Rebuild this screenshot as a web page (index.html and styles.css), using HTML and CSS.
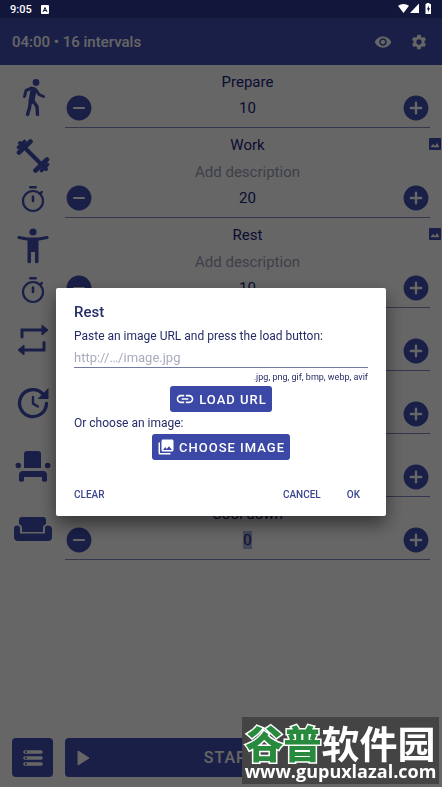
FILE: index.html
```html
<!DOCTYPE html>
<html lang="en">
<head>
	<meta charset="utf-8">
	<meta name="viewport" content="width=device-width, initial-scale=1">
	<title>Interval timer</title>
	<link rel="stylesheet" href="styles.css">
</head>
<body>
<!-- shared icons -->
<svg class="sprite" aria-hidden="true">
	<symbol id="minus" viewBox="0 0 26 26"><circle cx="13" cy="13" r="12.4" fill="currentColor"/><path d="M8 13h10" stroke="#fff" stroke-width="2.2" stroke-linecap="round"/></symbol>
	<symbol id="plus" viewBox="0 0 26 26"><circle cx="13" cy="13" r="12.4" fill="currentColor"/><path d="M7.8 13h10.4M13 7.8v10.4" stroke="#fff" stroke-width="2.4" stroke-linecap="round"/></symbol>
	<symbol id="timer" viewBox="0 0 24 28"><g fill="none" stroke="currentColor" stroke-linecap="round"><circle cx="12" cy="16" r="10" stroke-width="2.2"/><path d="M9.3 2.2h5.4M12 11.5v4.5" stroke-width="2.6"/><path d="M19.5 8.5l1.3-1.5" stroke-width="2.4"/></g></symbol>
	<symbol id="picture" viewBox="0 0 12 12"><rect width="12" height="12" rx="1" fill="currentColor"/><path d="M2 9.3V8.2l2-2.2 2 2.1 2.1-3L10 8.2v1.1z" fill="#fff"/></symbol>
</svg>

<div class="status">
	<span>9:05</span>
	<svg width="8" height="9" viewBox="0 0 8 9"><rect width="8" height="9" rx="1" fill="#fff"/><path d="M2 7l2-4.5L6 7M2.7 5.5h2.6" fill="none" stroke="#11163a"/></svg>
	<svg class="signal" width="34" height="12" viewBox="0 0 34 12" fill="#fff"><path d="M0 2.8Q5.500-.8 11 2.800L5.500 10zM21 .5V10h-9z"/><path d="M28.500 1V0h3v1h1.500v10h-5.500V1z"/><path d="M30.800 2.500l-2 4h1.200v2.700l2-4h-1.200z" fill="#11163a"/></svg>
</div>

<header class="bar">
	<h1>04:00 • 16 intervals</h1>
	<button aria-label="Preview"><svg width="18" height="18" viewBox="0 0 24 24"><path fill="currentColor" d="M12 4.500C7 4.500 2.730 7.610 1 12c1.730 4.390 6 7.500 11 7.500s9.270-3.110 11-7.500c-1.730-4.390-6-7.500-11-7.500zM12 17c-2.760 0-5-2.240-5-5s2.240-5 5-5 5 2.240 5 5-2.240 5-5 5zm0-8c-1.660 0-3 1.340-3 3s1.340 3 3 3 3-1.340 3-3-1.340-3-3-3z"/></svg></button>
	<button aria-label="Settings"><svg width="18" height="18" viewBox="0 0 24 24"><path fill="currentColor" d="M19.140 12.940c.04-.3.06-.61.06-.94 0-.32-.02-.64-.07-.94l2.030-1.580c.18-.14.23-.41.12-.61l-1.920-3.320c-.12-.22-.37-.29-.59-.22l-2.390.96c-.5-.38-1.030-.7-1.620-.94l-.36-2.540c-.04-.24-.24-.41-.48-.41h-3.840c-.24 0-.43.17-.47.41l-.36 2.540c-.59.24-1.130.57-1.620.94l-2.390-.96c-.22-.08-.47 0-.59.22L2.740 8.870c-.12.21-.08.47.12.61l2.030 1.580c-.05.3-.09.63-.09.94s.02.64.07.94l-2.030 1.580c-.18.14-.23.41-.12.61l1.920 3.320c.12.22.37.29.59.22l2.390-.96c.5.38 1.030.7 1.620.94l.36 2.540c.05.24.24.41.48.41h3.840c.24 0 .44-.17.47-.41l.36-2.540c.59-.24 1.130-.56 1.620-.94l2.390.96c.22.08.47 0 .59-.22l1.920-3.320c.12-.22.07-.47-.12-.61l-2.010-1.580zM12 15.600c-1.980 0-3.600-1.620-3.600-3.600s1.620-3.600 3.600-3.600 3.600 1.620 3.600 3.600-1.620 3.600-3.600 3.600z"/></svg></button>
</header>

<main class="list">
	<section class="item">
		<div class="icons">
			<svg width="24" height="40" viewBox="0 0 24 40"><circle cx="15" cy="5.500" r="3.400" fill="currentColor"/><g fill="none" stroke="currentColor" stroke-linecap="round" stroke-linejoin="round"><path d="M3.500 19.500L5 13.500l6-2.500 4 2 3 4.500 4.500 2" stroke-width="3"/><path d="M12.500 13l-2 11" stroke-width="6"/><path d="M9.500 24L8.500 31l-2 6.500M12 24l4 5.500.5 8" stroke-width="3.400"/></g></svg>
		</div>
		<div class="body">
			<label for="prepare">Prepare</label>
			<div class="stepper">
				<button aria-label="Less"><svg><use href="#minus"/></svg></button>
				<input id="prepare" value="10">
				<button aria-label="More"><svg><use href="#plus"/></svg></button>
			</div>
		</div>
	</section>
	<section class="item">
		<div class="icons pair">
			<svg width="34" height="34" viewBox="0 0 34 34" fill="none" stroke="currentColor" stroke-linecap="round"><path d="M8 8l18 18" stroke-width="4"/><path d="M3 13.500L14.500 2.500" stroke-width="4.600"/><path d="M2.500 8.500L8.500 2.500" stroke-width="3.600"/><path d="M4 4l5 5" stroke-width="4"/><path d="M19.500 31.500L31 20.500" stroke-width="4.600"/><path d="M25.500 31.500l6-6" stroke-width="3.600"/><path d="M25 25l5 5" stroke-width="4"/></svg>
			<svg width="24" height="28"><use href="#timer"/></svg>
		</div>
		<div class="body">
			<label for="work">Work</label>
			<input class="desc" placeholder="Add description" aria-label="Work description">
			<div class="stepper">
				<button aria-label="Less"><svg><use href="#minus"/></svg></button>
				<input id="work" value="20">
				<button aria-label="More"><svg><use href="#plus"/></svg></button>
			</div>
		</div>
		<button class="badge" aria-label="Work image"><svg><use href="#picture"/></svg></button>
	</section>
	<section class="item">
		<div class="icons pair">
			<svg width="32" height="36" viewBox="0 0 32 36"><circle cx="16" cy="4" r="3.600" fill="currentColor"/><path d="M2 9.500l8 1.500h12l8-1.500" fill="none" stroke="currentColor" stroke-width="3.200" stroke-linecap="round" stroke-linejoin="round"/><path d="M10.500 10h11v24.500q-2 1.500-3.500 0V24h-4v10.500q-1.500 1.500-3.500 0z" fill="currentColor"/></svg>
			<svg width="24" height="28"><use href="#timer"/></svg>
		</div>
		<div class="body">
			<label for="rest">Rest</label>
			<input class="desc" placeholder="Add description" aria-label="Rest description">
			<div class="stepper">
				<button aria-label="Less"><svg><use href="#minus"/></svg></button>
				<input id="rest" value="10">
				<button aria-label="More"><svg><use href="#plus"/></svg></button>
			</div>
		</div>
		<button class="badge" aria-label="Rest image"><svg><use href="#picture"/></svg></button>
	</section>
	<section class="item">
		<div class="icons">
			<svg width="32" height="32" viewBox="0 0 32 32"><path d="M5 13V6h20M27 18.500V26H7" fill="none" stroke="currentColor" stroke-width="3" stroke-linecap="round"/><path d="M25 1l6 5-6 5zM7 21l-6 5 6 5z" fill="currentColor" stroke="currentColor" stroke-linejoin="round"/></svg>
		</div>
		<div class="body">
			<label for="cycles">Cycles</label>
			<div class="stepper">
				<button aria-label="Less"><svg><use href="#minus"/></svg></button>
				<input id="cycles" value="8">
				<button aria-label="More"><svg><use href="#plus"/></svg></button>
			</div>
		</div>
	</section>
	<section class="item">
		<div class="icons">
			<svg width="32" height="32" viewBox="0 0 32 32"><g fill="none" stroke="currentColor" stroke-linecap="round"><path d="M25.500 6.500A13.500 13.500 0 1 0 29.500 16.500" stroke-width="3.400"/><path d="M16 10v6.500l4.800 3" stroke-width="2.400"/></g><path d="M31.500 1v11h-11z" fill="currentColor"/></svg>
		</div>
		<div class="body">
			<label for="sets">Sets</label>
			<div class="stepper">
				<button aria-label="Less"><svg><use href="#minus"/></svg></button>
				<input id="sets" value="1">
				<button aria-label="More"><svg><use href="#plus"/></svg></button>
			</div>
		</div>
	</section>
	<section class="item">
		<div class="icons">
			<svg width="36" height="32" viewBox="0 0 36 32" fill="currentColor"><path d="M9 18V4q0-3 3-3h11q3 0 3 3v14z"/><circle cx="3.300" cy="15.500" r="2.800"/><circle cx="32.700" cy="15.500" r="2.800"/><path d="M4 31v-6q0-4 4-4h20q4 0 4 4v6q-2.500 1.500-5 0v-4H9v4q-2.500 1.500-5 0z"/></svg>
		</div>
		<div class="body">
			<label for="between">Rest between sets</label>
			<div class="stepper">
				<button aria-label="Less"><svg><use href="#minus"/></svg></button>
				<input id="between" value="0">
				<button aria-label="More"><svg><use href="#plus"/></svg></button>
			</div>
		</div>
	</section>
	<section class="item">
		<div class="icons">
			<svg width="40" height="26" viewBox="0 0 40 26" fill="currentColor"><path d="M6 8V4q0-3 3-3h21q3 0 3 3v4q-3 1-3 4v4H9v-4q0-3-3-4z"/><path d="M1 12q0-2.500 3-2.500t3 2.500v5.500h25V12q0-2.500 3-2.500t4 2.500v9q0 4-4 4H5q-4 0-4-4z"/></svg>
		</div>
		<div class="body">
			<label for="cool">Cool down</label>
			<div class="stepper">
				<button aria-label="Less"><svg><use href="#minus"/></svg></button>
				<input id="cool" class="selected" value="0">
				<button aria-label="More"><svg><use href="#plus"/></svg></button>
			</div>
		</div>
	</section>
</main>

<footer class="actions">
	<button class="menu" aria-label="Workouts"><svg width="20" height="16" viewBox="0 0 20 16"><path d="M2 2h16M2 8h16M2 14h16" stroke="#fff" stroke-width="3.600" stroke-linecap="round"/><g fill="#3f4eb1"><circle cx="3" cy="2" r="1"/><circle cx="3" cy="8" r="1"/><circle cx="3" cy="14" r="1"/></g></svg></button>
	<button class="start"><svg width="13" height="16" viewBox="0 0 13 16"><path d="M1 1l11 7-11 7z" fill="#fff" stroke="#fff" stroke-linejoin="round"/></svg><span>START</span></button>
</footer>

<div class="backdrop">
	<form class="dialog" role="dialog" aria-labelledby="title">
		<h2 id="title">Rest</h2>
		<label for="url">Paste an image URL and press the load button:</label>
		<input id="url" type="text" placeholder="http://…/image.jpg">
		<p class="hint">.jpg, png, gif, bmp, webp, avif</p>
		<button type="button" class="fill"><svg width="20" height="20" viewBox="0 0 24 24"><path fill="currentColor" d="M3.900 12c0-1.710 1.390-3.100 3.100-3.100h4V7H7c-2.760 0-5 2.240-5 5s2.240 5 5 5h4v-1.900H7c-1.710 0-3.100-1.390-3.100-3.100zM8 13h8v-2H8v2zm9-6h-4v1.900h4c1.710 0 3.100 1.390 3.100 3.100s-1.390 3.100-3.100 3.100h-4V17h4c2.760 0 5-2.240 5-5s-2.240-5-5-5z"/></svg>LOAD URL</button>
		<p>Or choose an image:</p>
		<button type="button" class="fill"><svg width="18" height="18" viewBox="0 0 24 24"><path fill="currentColor" d="M22 16V4c0-1.100-.9-2-2-2H8c-1.100 0-2 .9-2 2v12c0 1.100.9 2 2 2h12c1.100 0 2-.9 2-2zm-11-4l2.030 2.710L16 11l4 5H8l3-4zM2 6v14c0 1.100.9 2 2 2h14v-2H4V6H2z"/></svg>CHOOSE IMAGE</button>
		<div class="links">
			<button type="button">CLEAR</button>
			<button type="button">CANCEL</button>
			<button type="button">OK</button>
		</div>
	</form>
</div>

<div class="mark">
	<div class="name"><b>谷普</b>软件园</div>
	<div class="site">www.gupuxlazal.com</div>
</div>
</body>
</html>
```
FILE: styles.css
```css
*{box-sizing: border-box;margin: 0;padding: 0;}
body{
	min-height: 100vh;
	display: flex;
	flex-direction: column;
	font-family: Roboto, "Liberation Sans", sans-serif;
	font-size: 15px;
	color: #1a237e;
	background-color: #fff;
}
button, input{font: inherit;color: inherit;border: 0;background: none;}
button{cursor: pointer;}
svg{display: block;flex: none;}
.sprite{position: absolute;width: 0;height: 0;}

/* status bar stays above the backdrop */
.status{
	position: relative;
	z-index: 2;
	display: flex;
	align-items: center;
	gap: 9px;
	height: 18px;
	padding: 0 10px;
	background-color: #11163a;
	color: #fff;
	font-size: 11px;
	font-weight: 500;
}
.status .signal{margin-left: auto;}

.bar{
	display: flex;
	align-items: center;
	gap: 18px;
	height: 47px;
	padding: 0 14px 0 12px;
	background-color: #3f4eb1;
	color: #fff;
}
.bar h1{flex: 1;font-size: 15px;font-weight: 500;}

.item{display: flex;position: relative;padding-right: 12px;}
.icons{
	width: 65px;
	display: flex;
	flex-direction: column;
	align-items: center;
	justify-content: center;
	gap: 12px;
	color: #3f4eb1;
}
.icons.pair{padding-top: 5px;}
.body{
	flex: 1;
	display: flex;
	flex-direction: column;
	padding: 4px 1px 6px;
	border-bottom: 1px solid #7f8bc8;
}
.body label{line-height: 26px;text-align: center;}
.body input{text-align: center;}
.desc{height: 27px;}
.desc::placeholder{color: #9b9eb8;opacity: 1;}
.stepper{display: flex;align-items: center;justify-content: space-between;}
.stepper input{width: 60px;height: 26px;}
.stepper button, .stepper svg{width: 26px;height: 26px;color: #3f4eb1;}
.stepper .selected{width: 1ch;height: 18px;background-color: #a9b2dc;}
.badge{position: absolute;top: 10px;right: 1px;color: #3f4eb1;}
.badge svg{width: 12px;height: 12px;}

.actions{display: flex;gap: 12px;margin-top: auto;padding: 0 12px 10px;}
.actions button{
	height: 39px;
	border-radius: 4px;
	background-color: #3f4eb1;
	color: #fff;
}
.menu{width: 41px;display: flex;align-items: center;justify-content: center;}
.start{
	flex: 1;
	display: flex;
	align-items: center;
	padding: 0 59px 0 12px;
	font-size: 16px;
	font-weight: 500;
	letter-spacing: 1px;
}
.start span{flex: 1;}

.backdrop{
	position: fixed;
	inset: 0;
	z-index: 1;
	display: flex;
	align-items: center;
	justify-content: center;
	padding: 17px 56px 0;
	background-color: rgba(0,0,0,.6);
}
.dialog{
	flex: 1;
	max-width: 480px;
	display: flex;
	flex-direction: column;
	padding: 14px 18px 11px;
	border-radius: 2px;
	background-color: #fff;
	box-shadow: 0 8px 18px rgba(0,0,0,.5);
	color: #252c68;
	font-size: 12px;
}
.dialog h2{font-size: 15px;font-weight: 500;line-height: 20px;}
.dialog label{margin-top: 4px;line-height: 20px;}
.dialog input{
	height: 22px;
	padding-top: 2px;
	border-bottom: 1px solid #737a9f;
	font-size: 13px;
	outline: 0;
}
.dialog input::placeholder{color: #a9acbf;opacity: 1;}
.dialog p{line-height: 22px;}
.dialog .hint{font-size: 9px;line-height: 18px;text-align: right;}
.fill{
	display: flex;
	align-items: center;
	align-self: center;
	gap: 4px;
	height: 26px;
	padding: 0 5px;
	border-radius: 3px;
	background-color: #3b48a5;
	color: #fff;
	font-size: 13px;
	font-weight: 500;
	letter-spacing: 1px;
}
.links{display: flex;gap: 26px;margin-top: 23px;padding-right: 8px;}
.links button{height: 22px;color: #3b4590;font-size: 10px;font-weight: 500;}
.links button:first-child{margin-right: auto;}

.mark{
	position: fixed;
	right: 3px;
	bottom: 3px;
	z-index: 3;
	width: 197px;
	height: 67px;
	padding-top: 6px;
	background-color: #444;
	color: #fff;
	text-align: center;
	white-space: nowrap;
}
.name{font: 700 38px/38px "Noto Sans CJK SC", sans-serif;}
.name b{
	color: #278a3c;
	-webkit-text-stroke: 3px #fff;
	paint-order: stroke fill;
}
.site{font: 700 18px/20px "Open Sans", sans-serif;}
```
